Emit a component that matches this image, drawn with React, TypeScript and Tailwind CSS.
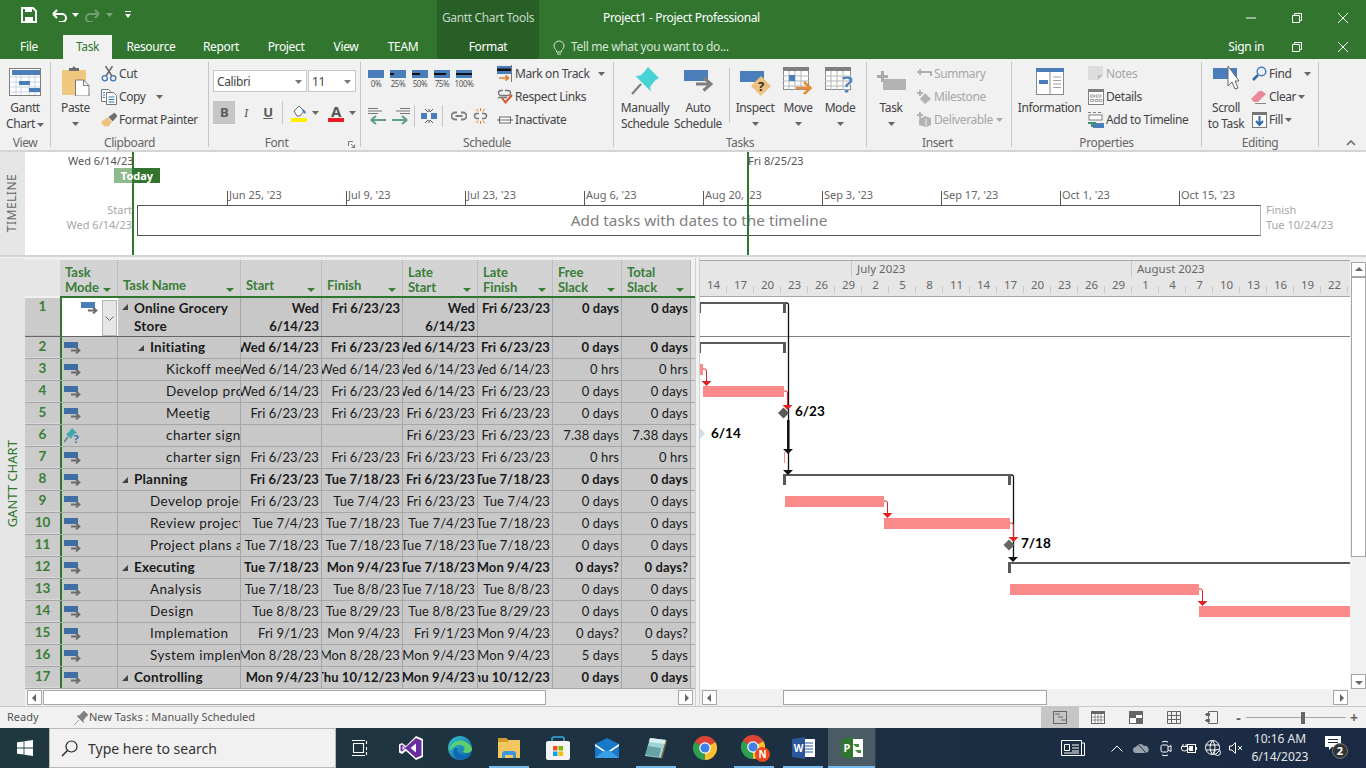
import React from "react";

function Caret({ c = "#666", className = "" }: { c?: string; className?: string }) {
  return (
    <svg width="7" height="4" viewBox="0 0 7 4" className={"shrink-0 " + className}>
      <path d="M0 0h7L3.5 4z" fill={c} />
    </svg>
  );
}

const Ic = ({ w, h, children, className = "" }: { w: number; h: number; children: React.ReactNode; className?: string }) => (
  <svg width={w} height={h} viewBox={`0 0 ${w} ${h}`} className={"shrink-0 " + className}>
    {children}
  </svg>
);

const GanttIcon = () => (
  <Ic w={32} h={28}>
    <rect x="0.5" y="0.5" width="31" height="27" fill="#fff" stroke="#7f7f7f" />
    <rect x="3" y="2" width="28" height="5" fill="#4a7ebb" />
    {[9, 14, 19, 24].map((y) => <path key={y} d={`M1 ${y}h30`} stroke="#c8d4e4" />)}
    {[7, 12, 20, 26].map((x) => <path key={x} d={`M${x} 7v20`} stroke="#c8d4e4" />)}
    <rect x="10" y="13" width="11" height="4" fill="#4a7ebb" />
    <rect x="20" y="20" width="11" height="4" fill="#4a7ebb" />
  </Ic>
);
const PasteIcon = () => (
  <Ic w={29} h={30}>
    <rect x="1" y="4" width="24" height="25" rx="1" fill="#efc77f" />
    <path d="M8 5h10V2h-3.4a1.6 1.6 0 0 0-3.2 0H8z" fill="#6e6e6e" />
    <path d="M14.5 14h8l5.5 5.5V30H14.5z" fill="#fff" stroke="#7a7a7a" />
    <path d="M22.5 14v5.5H28" fill="none" stroke="#7a7a7a" />
  </Ic>
);
const CutIcon = () => (
  <Ic w={16} h={16}>
    <circle cx="3.8" cy="12.2" r="2.6" fill="none" stroke="#3f76b5" strokeWidth="1.3" />
    <circle cx="12.2" cy="12.2" r="2.6" fill="none" stroke="#3f76b5" strokeWidth="1.3" />
    <path d="M5 10L11.5 0M11 10L4.5 0" stroke="#6d6d6d" strokeWidth="1.6" />
  </Ic>
);
const CopyIcon = () => (
  <Ic w={16} h={16}>
    <path d="M.5.5h7l2 2v10H.5z" fill="#fff" stroke="#777" />
    <path d="M5.5 3.5h7l3 3v9h-10z" fill="#fff" stroke="#777" />
    <path d="M7.5 8h6M7.5 10.5h6M7.5 13h6M2 3.5h2M2 6h2M2 8.5h2" stroke="#3f76b5" />
  </Ic>
);
const PainterIcon = () => (
  <Ic w={17} h={15}>
    <path d="M0 10l7-5 4 5-4 5q-1-1.500-2-1l-1 1q-1-2-2-1.500z" fill="#edc27f" />
    <path d="M7.500 5l6-4.500 3 3.500-4.800 5.500z" fill="#6e6e6e" />
  </Ic>
);
const Pct = ({ fill, t }: { fill: number; t: string }) => (
  <div className="flex flex-col items-center w-[16px]">
    <Ic w={16} h={8}>
      <rect width="16" height="8" fill="#4a7ebb" />
      {fill > 0 && <rect y="3" width={fill} height="2" fill="#111" />}
    </Ic>
    <span className="text-[8px] leading-[12px] text-[#555] whitespace-nowrap">{t}</span>
  </div>
);
const OutdentIcon = ({ flip }: { flip?: boolean }) => (
  <Ic w={20} h={17} className={flip ? "-scale-x-100" : ""}>
    <path d="M0 .5h10M0 3h14M0 5.500h10" stroke="#777" />
    <path d="M3 12h15M3 12l5-4M3 12l5 4" stroke="#5f9e8f" strokeWidth="2.200" fill="none" />
  </Ic>
);
const SplitIcon = () => (
  <Ic w={16} h={16}>
    <rect y="5" width="6" height="6" fill="#4a7ebb" />
    <rect x="10" y="5" width="6" height="6" fill="#4a7ebb" />
    <path d="M4 1l3 3M12 1L9 4M4 15l3-3M12 15l-3-3M8 1v3M8 12v3" stroke="#555" />
  </Ic>
);
const LinkIcon = ({ c = "#808080" }: { c?: string }) => (
  <Ic w={16} h={10}>
    <path d="M6 1.500H4a3.500 3.500 0 0 0 0 7h2M10 1.500h2a3.500 3.500 0 0 1 0 7h-2M4.500 5h7" stroke={c} strokeWidth="1.800" fill="none" />
  </Ic>
);
const UnlinkIcon = () => (
  <Ic w={15} h={16}>
    <path d="M6 5.500H4a2.500 2.500 0 0 0 0 5h2M9 5.500h2a2.500 2.500 0 0 1 0 5H9" stroke="#777" strokeWidth="1.500" fill="none" />
    <path d="M7.500 0v3M3.500 1l1.500 2.500M11.500 1L10 3.500M7.500 13v3M3.500 15l1.500-2.500M11.500 15L10 12.500" stroke="#e07b2e" />
  </Ic>
);
const TrackIcon = () => (
  <Ic w={16} h={17}>
    <rect y="1" width="15" height="8" fill="#4a7ebb" />
    <rect y="3.500" width="15" height="2.500" fill="#111" />
    <path d="M14.500 0v17" stroke="#777" />
    <path d="M2 13h10M8.500 10.500l3 2.500-3 2.500" stroke="#e5822e" strokeWidth="1.700" fill="none" />
  </Ic>
);
const RespectIcon = () => (
  <Ic w={17} h={16}>
    <path d="M6 1.500H4a2.500 2.500 0 0 0 0 5h7a2.500 2.500 0 0 0 0-5H8M1 8.500h9" stroke="#777" strokeWidth="1.400" fill="none" />
    <path d="M5 9l3.500 4.500L15 6" stroke="#d9542b" strokeWidth="2" fill="none" />
  </Ic>
);
const InactiveIcon = () => (
  <Ic w={16} h={8}>
    <path d="M0 4h2M14 4h2" stroke="#666" />
    <rect x="2.500" y="1" width="11" height="6" fill="#fff" stroke="#666" />
    <path d="M3 4h10" stroke="#666" />
  </Ic>
);
const PinIcon = ({ s = 28 }: { s?: number }) => (
  <svg width={s} height={s} viewBox="0 0 28 28" className="shrink-0">
    <path d="M14 4l3-4 11 11-4 2.500-5 6.500 1 4.500L4.500 9l5-.5z" fill="#46d3d6" />
    <path d="M10 17L1 27" stroke="#7a7a7a" strokeWidth="2" />
  </svg>
);
const AutoIcon = () => (
  <Ic w={29} h={22}>
    <rect width="24" height="11" fill="#4a7ebb" />
    <path d="M12 14h14M19.500 7.500L27 14l-7.500 6.500" stroke="#7f7f7f" strokeWidth="3" fill="none" />
  </Ic>
);
const InspectIcon = () => (
  <Ic w={31} h={29}>
    <rect y="4" width="24" height="11" fill="#4a7ebb" />
    <path d="M21 9l10 10-10 10-10-10z" fill="#eec27e" />
    <text x="21" y="24" textAnchor="middle" fontSize="13" fontWeight="700" fill="#333" fontFamily="Noto Sans">?</text>
  </Ic>
);
const CalGrid = () => (
  <>
    <rect x=".5" y=".5" width="25" height="22" fill="#fff" stroke="#8a8a8a" />
    <rect width="26" height="4" fill="#7f7f7f" />
    {[9, 14, 19].map((y) => <path key={y} d={`M0 ${y}h26`} stroke="#b5b5b5" />)}
    {[6, 12, 18].map((x) => <path key={x} d={`M${x} 4v19`} stroke="#b5b5b5" />)}
  </>
);
const MoveIcon = () => (
  <Ic w={30} h={28}>
    <CalGrid />
    <rect x="6" y="8" width="6" height="6" fill="#4a7ebb" />
    <path d="M13 21h14M21 15l6.500 6-6.500 6" stroke="#e58a3b" strokeWidth="2.600" fill="none" />
  </Ic>
);
const ModeIcon = () => (
  <Ic w={30} h={28}>
    <CalGrid />
    <text x="22" y="26" textAnchor="middle" fontSize="24" fontWeight="700" fill="#4a7ebb" fontFamily="Noto Sans" stroke="#fff" strokeWidth=".4">?</text>
  </Ic>
);
const TaskIcon = () => (
  <Ic w={29} h={20}>
    <path d="M4 0h3v4h4v3H7v4H4V7H0V4h4z" fill="#aaa" />
    <rect x="6" y="8" width="23" height="11" fill="#b3b3b3" />
  </Ic>
);
const SumIcon = () => (
  <Ic w={16} h={14}>
    <path d="M3 2h2v2h2v2H5v2H3V6H1V4h2z" fill="#b3b3b3" />
    <path d="M5 5h10v4M15 5v4" stroke="#9a9a9a" strokeWidth="1.500" fill="none" />
  </Ic>
);
const MileIcon = () => (
  <Ic w={16} h={14}>
    <path d="M3 0h2v2h2v2H5v2H3V4H1V2h2z" fill="#b3b3b3" />
    <path d="M9 3l6 6-6 5-5-5z" fill="#b3b3b3" />
  </Ic>
);
const DelivIcon = () => (
  <Ic w={16} h={15}>
    <path d="M3 0h2v2h2v2H5v2H3V4H1V2h2z" fill="#b3b3b3" />
    <path d="M3 7l6-3 6 2v7l-5 2-7-2z" fill="#b3b3b3" />
    <path d="M10 7v7" stroke="#f1f1f1" />
  </Ic>
);
const InfoIcon = () => (
  <Ic w={28} h={27}>
    <rect x=".5" y=".5" width="27" height="26" fill="#fff" stroke="#888" />
    <rect width="28" height="4" fill="#4a7ebb" />
    <rect x="3" y="12" width="9" height="4" fill="#4a7ebb" />
    <path d="M14 4v23" stroke="#888" />
    <path d="M17 9h8M17 12.500h8M17 16h8M17 19.500h8" stroke="#a0a0a0" />
  </Ic>
);
const NotesIcon = () => (
  <Ic w={16} h={15}><path d="M0 0h15v9l-5 5H0z" fill="#dcdcdc" /><path d="M10 14V9h5z" fill="#bdbdbd" /></Ic>
);
const DetailsIcon = () => (
  <Ic w={16} h={16}>
    <rect x=".5" y=".5" width="15" height="15" fill="#fff" stroke="#808080" />
    <rect width="16" height="3" fill="#808080" />
    <path d="M2.500 6h4v2h-4zM8 6h5v2H8zM2.500 10.500h3v2h-3zM7 10.500h3v2H7zM11 10.500h3v2h-3z" fill="none" stroke="#808080" strokeWidth=".7" />
  </Ic>
);
const AddTlIcon = () => (
  <Ic w={16} h={16}>
    <path d="M0 .5h3M5 .5h3M10 .5h3" stroke="#808080" />
    <rect x="1" y="3" width="13" height="5" fill="#fff" stroke="#808080" />
    <rect x="5" y="11" width="11" height="5" fill="#4a7ebb" />
    <path d="M2 10h6v2H5v3H3v-3H0v-2z" fill="#3f9070" />
  </Ic>
);
const ScrollIcon = () => (
  <Ic w={26} h={30}>
    <rect y="2" width="24" height="11" fill="#4a7ebb" />
    <path d="M15 0v20l4-4 3 7 3-1-3-7h4z" fill="#fff" stroke="#666" />
  </Ic>
);
const FindIcon = () => (
  <Ic w={15} h={15}>
    <circle cx="9.500" cy="5.500" r="4.300" fill="#eaf2fb" stroke="#4a7ebb" strokeWidth="1.500" />
    <path d="M6 9l-5 5" stroke="#2f69aa" strokeWidth="2.500" />
  </Ic>
);
const ClearIcon = () => (
  <Ic w={16} h={14}>
    <path d="M0 9l8-8h3l4 3-8 8H3z" fill="#e88a98" />
    <path d="M4 13.500h11" stroke="#888" />
  </Ic>
);
const FillIcon = () => (
  <Ic w={15} h={16}>
    <rect x=".5" y=".5" width="14" height="15" fill="#fff" stroke="#777" />
    <rect width="15" height="3" fill="#777" />
    <path d="M7.500 4v9M4 9l3.500 4L11 9" stroke="#2f69aa" strokeWidth="2" fill="none" />
  </Ic>
);
const BucketIcon = () => (
  <Ic w={16} h={18}>
    <path d="M3 7l5-5 5 5-4 5H6z" fill="#fff" stroke="#666" />
    <path d="M12 5l3 3-1 2-3-3z" fill="#4a7ebb" />
    <rect y="14" width="16" height="4" fill="#ffef00" />
  </Ic>
);

function Group({ className, label, children, labelClass = "", launcher }: { className: string; label: string; children: React.ReactNode; labelClass?: string; launcher?: boolean }) {
  return (
    <div className={`${className} h-[85px] mt-[3px] border-r border-[#c6c6c6] flex flex-col shrink-0 relative`}>
      <div className="h-[74px] flex">{children}</div>
      <div className={`h-[11px] leading-[14px] text-center text-[#666] text-[12px] ${labelClass}`}>{label}</div>
      {launcher && (
        <Ic w={7} h={7} className="absolute right-[5px] bottom-[-1px]">
          <path d="M.5 5V.5H5" fill="none" stroke="#777" /><path d="M3 3l3.500 3.500M3.500 6.500h3v-3" fill="none" stroke="#777" />
        </Ic>
      )}
    </div>
  );
}

function Large({ className, icon, lines, caret, iconBox = "h-[38px]" }: { className: string; icon: React.ReactNode; lines: string[]; caret?: boolean; iconBox?: string }) {
  return (
    <div className={`${className} flex flex-col items-center text-[12px] leading-[16px] text-[#444] shrink-0`}>
      <div className={`${iconBox} flex items-center justify-center`}>{icon}</div>
      {lines.map((l) => <span key={l} className="whitespace-nowrap">{l}</span>)}
      {caret && <Caret className="mt-[6px]" />}
    </div>
  );
}

function Small({ icon, text, caret, dim, className = "", iconW = "w-[18px]" }: { icon: React.ReactNode; text: string; caret?: React.ReactNode; dim?: boolean; className?: string; iconW?: string }) {
  return (
    <div className={`h-[23px] flex items-center text-[12px] whitespace-nowrap ${dim ? "text-[#a6a6a6]" : "text-[#444]"} ${className}`}>
      <span className={`${iconW} flex justify-center shrink-0`}>{icon}</span>
      <span className="ml-[1px]">{text}</span>
      {caret}
    </div>
  );
}

function TitleBar() {
  return (
    <div className="h-[59px] flex text-white shrink-0 bg-[#31752F] tracking-[-0.35px]">
      <div className="w-[437px] flex flex-col">
        <div className="h-[35px] flex items-center pb-[6px]">
          <Ic w={16} h={16} className="ml-[21px]">
            <path d="M1 1h11l3 3v11H1z" fill="none" stroke="#fff" strokeWidth="2" />
            <path d="M4 1h7v4H4zM4 10h8v5H4z" fill="#fff" />
          </Ic>
          <Ic w={16} h={14} className="ml-[14px]">
            <path d="M2 6h9a4 4 0 0 1 0 8H8M2 6l4-4M2 6l4 4" stroke="#fff" strokeWidth="2" fill="none" />
          </Ic>
          <Caret c="#fff" className="ml-[5px]" />
          <Ic w={16} h={14} className="ml-[6px] opacity-30 -scale-x-100">
            <path d="M2 6h9a4 4 0 0 1 0 8H8M2 6l4-4M2 6l4 4" stroke="#fff" strokeWidth="2" fill="none" />
          </Ic>
          <Caret c="#7da87c" className="ml-[5px]" />
          <Ic w={6} h={7} className="ml-[12px]">
            <path d="M0 .5h6" stroke="#fff" /><path d="M0 3h6L3 7z" fill="#fff" />
          </Ic>
        </div>
        <div className="h-[24px] flex text-[12px] leading-[24px] text-center">
          <span className="w-[59px] pr-[1px]">File</span>
          <span className="w-[4px]" />
          <span className="w-[49px] bg-[#f1f1f1] text-[#31752F]">Task</span>
          <span className="w-[78px]">Resource</span>
          <span className="w-[62px]">Report</span>
          <span className="w-[68px]">Project</span>
          <span className="w-[52px]">View</span>
          <span className="w-[62px]">TEAM</span>
        </div>
      </div>
      <div className="w-[102px] bg-[#285f26] flex flex-col text-[12px]">
        <div className="h-[35px] leading-[35px] text-center text-[#c5d6c4] whitespace-nowrap">Gantt Chart Tools</div>
        <div className="h-[24px] leading-[24px] text-center">Format</div>
      </div>
      <div className="flex-1 flex flex-col">
        <div className="h-[35px] flex items-center pl-[64px] text-[12px]">
          <span>Project1 - Project Professional</span>
          <span className="ml-auto flex items-center mr-[18px] gap-[36px]">
            <Ic w={10} h={10}><path d="M0 5h10" stroke="#fff" /></Ic>
            <Ic w={10} h={10}><path d="M.5 2.500h7v7h-7zM2.500 2.500v-2h7v7h-2" fill="none" stroke="#fff" /></Ic>
            <Ic w={10} h={10}><path d="M0 0l10 10M10 0L0 10" stroke="#fff" /></Ic>
          </span>
        </div>
        <div className="h-[24px] flex items-center text-[12px]">
          <Ic w={12} h={15} className="ml-[14px]">
            <path d="M3.500 10.500C2 9 1 7.800 1 6a5 5 0 0 1 10 0c0 1.800-1 3-2.500 4.500v1.500h-5zM4 14h4" fill="none" stroke="#d6e6d5" />
          </Ic>
          <span className="ml-[6px] text-[#d6e6d5]">Tell me what you want to do...</span>
          <span className="ml-auto mr-[18px] flex items-center">
            <span className="mr-[28px]">Sign in</span>
            <Ic w={10} h={10}><path d="M.5 2.500h7v7h-7zM2.500 2.500v-2h7v7h-2" fill="none" stroke="#fff" /></Ic>
            <Ic w={10} h={10} className="ml-[36px]"><path d="M0 0l10 10M10 0L0 10" stroke="#fff" /></Ic>
          </span>
        </div>
      </div>
    </div>
  );
}

function Ribbon() {
  return (
    <div className="h-[91px] flex bg-[#f1f1f1] shrink-0 relative tracking-[-0.4px]">
      <Group className="w-[51px]" label="View">
        <div className="w-[50px] flex flex-col items-center text-[12px] leading-[16px] text-[#444]">
          <div className="h-[38px] pt-[2px] flex items-center"><GanttIcon /></div>
          <span>Gantt</span>
          <span className="flex items-center gap-[2px]">Chart <Caret className="mt-[1px]" /></span>
        </div>
      </Group>
      <Group className="w-[158px]" label="Clipboard">
        <div className="w-[49px] flex flex-col items-center text-[12px] leading-[16px] text-[#444]">
          <div className="h-[38px] flex items-center"><PasteIcon /></div>
          <span>Paste</span>
          <Caret className="mt-[6px]" />
        </div>
        <div className="flex flex-col">
          <Small icon={<CutIcon />} text="Cut" />
          <Small icon={<CopyIcon />} text="Copy" caret={<Caret className="ml-[10px]" />} />
          <Small icon={<PainterIcon />} text="Format Painter" />
        </div>
      </Group>
      <Group className="w-[152px]" label="Font" labelClass="pr-[16px]" launcher>
        <div className="flex flex-col pl-[4px] pt-[8px]">
          <div className="flex gap-[1px]">
            <div className="w-[94px] h-[22px] bg-white border border-[#c6c6c6] flex items-center justify-between px-[3px] pr-[4px] pt-[1px] text-[12px] text-[#444]">
              Calibri <Caret c="#777" />
            </div>
            <div className="w-[48px] h-[22px] bg-white border border-[#c6c6c6] flex items-center justify-between px-[3px] pr-[4px] pt-[1px] text-[12px] text-[#444]">
              11 <Caret c="#777" />
            </div>
          </div>
          <div className="flex items-center mt-[9px] h-[23px] text-[#5a5a5a] text-[13px]">
            <span className="w-[22px] h-[23px] bg-[#c6c6c6] flex items-center justify-center font-bold">B</span>
            <span className="w-[22px] text-center italic font-serif">I</span>
            <span className="w-[22px] text-center underline font-bold">U</span>
            <span className="w-[4px] h-[23px] mr-[8px] border-r border-[#c6c6c6]" />
            <BucketIcon />
            <Caret className="ml-[5px]" />
            <div className="ml-[9px] flex flex-col items-center w-[16px] font-bold text-[15px] leading-[14px] text-[#555]">
              A<div className="w-[16px] h-[4px] bg-[#ee1c25]" />
            </div>
            <Caret className="ml-[5px]" />
          </div>
        </div>
      </Group>
      <Group className="w-[253px]" label="Schedule">
        <div className="w-[135px] pl-[7px] pt-[8px] flex flex-col">
          <div className="flex gap-[6px] h-[27px]">
            <Pct fill={0} t="0%" /><Pct fill={4} t="25%" /><Pct fill={8} t="50%" /><Pct fill={12} t="75%" /><Pct fill={16} t="100%" />
          </div>
          <div className="flex items-center mt-[7px] h-[24px]">
            <OutdentIcon />
            <span className="ml-[2px]"><OutdentIcon flip /></span>
            <span className="h-[22px] border-r border-[#c6c6c6] ml-[4px]" />
            <span className="ml-[6px]"><SplitIcon /></span>
            <span className="h-[22px] border-r border-[#c6c6c6] ml-[5px]" />
            <span className="ml-[8px]"><LinkIcon /></span>
            <span className="ml-[6px]"><UnlinkIcon /></span>
          </div>
        </div>
        <div className="flex flex-col">
          <Small icon={<TrackIcon />} text="Mark on Track" caret={<Caret className="ml-[9px]" />} iconW="w-[18px]" />
          <Small icon={<RespectIcon />} text="Respect Links" />
          <Small icon={<InactiveIcon />} text="Inactivate" />
        </div>
      </Group>
      <Group className="w-[253px]" label="Tasks">
        <Large className="w-[62px]" icon={<PinIcon />} lines={["Manually", "Schedule"]} />
        <Large className="w-[44px]" icon={<AutoIcon />} lines={["Auto", "Schedule"]} />
        <div className="w-[1px] ml-[9px] h-[55px] mt-[6px] bg-[#c6c6c6]" />
        <Large className="w-[50px]" icon={<InspectIcon />} lines={["Inspect"]} caret />
        <Large className="w-[36px]" icon={<MoveIcon />} lines={["Move"]} caret />
        <Large className="w-[48px]" icon={<ModeIcon />} lines={["Mode"]} caret />
      </Group>
      <Group className="w-[145px]" label="Insert" labelClass="pr-[3px]">
        <Large className="w-[48px]" icon={<TaskIcon />} lines={["Task"]} caret />
        <div className="flex flex-col">
          <Small dim icon={<SumIcon />} text="Summary" />
          <Small dim icon={<MileIcon />} text="Milestone" />
          <Small dim icon={<DelivIcon />} text="Deliverable" caret={<Caret c="#aaa" className="ml-[3px]" />} />
        </div>
      </Group>
      <Group className="w-[190px]" label="Properties">
        <Large className="w-[75px]" icon={<InfoIcon />} lines={["Information"]} />
        <div className="flex flex-col">
          <Small dim icon={<NotesIcon />} text="Notes" />
          <Small icon={<DetailsIcon />} text="Details" />
          <Small icon={<AddTlIcon />} text="Add to Timeline" />
        </div>
      </Group>
      <Group className="w-[117px]" label="Editing">
        <Large className="w-[48px]" icon={<ScrollIcon />} lines={["Scroll", "to Task"]} />
        <div className="flex flex-col">
          <Small icon={<FindIcon />} text="Find" caret={<Caret className="ml-[12px]" />} />
          <Small icon={<ClearIcon />} text="Clear" caret={<Caret className="ml-[2px]" />} />
          <Small icon={<FillIcon />} text="Fill" caret={<Caret className="ml-[2px]" />} />
        </div>
      </Group>
      <div className="flex-1 flex justify-end items-end pb-[4px] pr-[10px]">
        <Ic w={10} h={6}><path d="M1 5l4-4 4 4" stroke="#666" strokeWidth="1.500" fill="none" /></Ic>
      </div>
    </div>
  );
}

const TICKS = ["Jun 25, '23", "Jul 9, '23", "Jul 23, '23", "Aug 6, '23", "Aug 20, '23", "Sep 3, '23", "Sep 17, '23", "Oct 1, '23", "Oct 15, '23"];

function Timeline() {
  return (
    <div className="h-[107px] flex shrink-0 relative bg-white border-y-2 border-[#d4d4d4]">
      <div className="w-[25px] bg-[#e6e6e6] flex items-center justify-center pb-[2px]">
        <span className="-rotate-90 text-[12px] tracking-[.5px] text-[#666] whitespace-nowrap">TIMELINE</span>
      </div>
      <div className="w-[112px] flex flex-col items-end pr-[5px] text-[11px] text-[#a6a6a6] leading-[15px] pt-[50px]">
        <span>Start</span>
        <span>Wed 6/14/23</span>
      </div>
      <div className="w-[1124px] flex flex-col pt-[37px]">
        <div className="h-[14px] mt-[2px] flex pl-[90px] text-[11px] text-[#666] leading-[8px] overflow-visible">
          {TICKS.map((t) => (
            <div key={t} className="w-[119px] h-[14px] border-l border-[#555] pl-[1px] whitespace-nowrap shrink-0">{t}</div>
          ))}
        </div>
        <div className="h-[31px] border-y border-l border-[#555] border-r-[#b5b5b5] border-r flex items-center justify-center text-[15.3px] text-[#808080]">
          Add tasks with dates to the timeline
        </div>
      </div>
      <div className="flex flex-col pl-[5px] text-[11px] text-[#a6a6a6] leading-[15px] pt-[50px]">
        <span>Finish</span>
        <span>Tue 10/24/23</span>
      </div>
      <div className="absolute left-[132px] top-0 w-[2px] h-[103px] bg-[#31752F]" />
      <div className="absolute left-[747px] top-0 w-[2px] h-[103px] bg-[#31752F]" />
      <span className="absolute left-[68px] top-[1px] text-[11px] leading-[15px] text-[#555]">Wed 6/14/23</span>
      <span className="absolute left-[748px] top-[1px] text-[11px] leading-[15px] text-[#555]">Fri 8/25/23</span>
      <div className="absolute left-[114px] top-[16px] w-[46px] h-[15px] flex text-white text-[11px] font-bold leading-[15px]">
        <div className="w-[18px] bg-[#8fb98e]" />
        <div className="flex-1 bg-[#31752F]" />
        <span className="absolute inset-0 text-center">Today</span>
      </div>
    </div>
  );
}

type Row = [number, number, string, string, string, string, string, string, string, boolean?, boolean?];
const ROWS: Row[] = [
  [2, 1, "Initiating", "Wed 6/14/23", "Fri 6/23/23", "Wed 6/14/23", "Fri 6/23/23", "0 days", "0 days", true, true],
  [3, 2, "Kickoff meeting", "Wed 6/14/23", "Wed 6/14/23", "Wed 6/14/23", "Wed 6/14/23", "0 hrs", "0 hrs"],
  [4, 2, "Develop project charter", "Wed 6/14/23", "Fri 6/23/23", "Wed 6/14/23", "Fri 6/23/23", "0 days", "0 days"],
  [5, 2, "Meetig", "Fri 6/23/23", "Fri 6/23/23", "Fri 6/23/23", "Fri 6/23/23", "0 days", "0 days"],
  [6, 2, "charter signing", "", "", "Fri 6/23/23", "Fri 6/23/23", "7.38 days", "7.38 days"],
  [7, 2, "charter signing", "Fri 6/23/23", "Fri 6/23/23", "Fri 6/23/23", "Fri 6/23/23", "0 hrs", "0 hrs"],
  [8, 0, "Planning", "Fri 6/23/23", "Tue 7/18/23", "Fri 6/23/23", "Tue 7/18/23", "0 days", "0 days", true, true],
  [9, 1, "Develop project plan", "Fri 6/23/23", "Tue 7/4/23", "Fri 6/23/23", "Tue 7/4/23", "0 days", "0 days"],
  [10, 1, "Review project plan", "Tue 7/4/23", "Tue 7/18/23", "Tue 7/4/23", "Tue 7/18/23", "0 days", "0 days"],
  [11, 1, "Project plans approved", "Tue 7/18/23", "Tue 7/18/23", "Tue 7/18/23", "Tue 7/18/23", "0 days", "0 days"],
  [12, 0, "Executing", "Tue 7/18/23", "Mon 9/4/23", "Tue 7/18/23", "Mon 9/4/23", "0 days?", "0 days?", true, true],
  [13, 1, "Analysis", "Tue 7/18/23", "Tue 8/8/23", "Tue 7/18/23", "Tue 8/8/23", "0 days", "0 days"],
  [14, 1, "Design", "Tue 8/8/23", "Tue 8/29/23", "Tue 8/8/23", "Tue 8/29/23", "0 days", "0 days"],
  [15, 1, "Implemation", "Fri 9/1/23", "Mon 9/4/23", "Fri 9/1/23", "Mon 9/4/23", "0 days?", "0 days?"],
  [16, 1, "System implementation", "Mon 8/28/23", "Mon 8/28/23", "Mon 9/4/23", "Mon 9/4/23", "5 days", "5 days"],
  [17, 0, "Controlling", "Mon 9/4/23", "Thu 10/12/23", "Mon 9/4/23", "Thu 10/12/23", "0 days", "0 days", true, true],
];
const LEVEL = ["pl-[16px]", "pl-[32px]", "pl-[48px]"];
const W = ["w-[81px]", "w-[81px]", "w-[75px]", "w-[75px]", "w-[69px]", "w-[69px]"];

const ModeGlyph = ({ dark }: { dark?: boolean }) => (
  <Ic w={17} h={12}>
    <rect width="14" height="6" fill={dark ? "#3f6ea5" : "#4a7ebb"} />
    <path d="M7 8.500h8M12 5.500l3.500 3-3.500 3" stroke="#6b6b6b" strokeWidth="1.800" fill="none" />
  </Ic>
);
const PinQ = () => (
  <Ic w={17} h={15}>
    <path d="M5 4l3-4 5 5-3 1-2 3-1 2-5-5z" fill="#3fa9ad" />
    <path d="M4 9L0 14" stroke="#5b7e92" strokeWidth="1.500" />
    <text x="12" y="15" textAnchor="middle" fontSize="11" fontWeight="700" fill="#3f6ea5" fontFamily="Noto Sans">?</text>
  </Ic>
);
const Expand = () => (
  <svg width="6" height="6" viewBox="0 0 6 6" className="shrink-0"><path d="M6 0v6H0z" fill="#444" /></svg>
);

const Cell = ({ w, bold, children }: { w: string; bold?: boolean; children?: React.ReactNode }) => (
  <div className={`${w} shrink-0 border-r border-[#a6a6a6] flex justify-end items-center overflow-hidden pr-[2px] whitespace-nowrap text-[13px] tracking-[.1px] text-[#1a1a1a] ${bold ? "font-bold" : ""}`}>
    {children}
  </div>
);

function HeadCell({ w, a, b }: { w: string; a: string; b?: string }) {
  return (
    <div className={`${w} shrink-0 border-r border-[#bdbdbd] relative pl-[5px] flex flex-col justify-end leading-[15px] font-bold text-[#3a7d38] text-[13px] ${b ? "pb-[1px]" : "pb-[3px]"}`}>
      <span>{a}</span>
      {b && <span>{b}</span>}
      <svg width="8" height="4" viewBox="0 0 8 4" className="absolute right-[6px] bottom-[4px]"><path d="M0 0h8L4 4z" fill="#3a7d38" /></svg>
    </div>
  );
}

function Table() {
  return (
    <div className="font-['Lato',sans-serif] text-[13.5px] h-[431px] flex flex-col pt-[2px] overflow-hidden">
      <div className="h-[36px] flex shrink-0">
        <div className="w-[35px] shrink-0 bg-[#e6e6e6]" />
        <div className="flex bg-[#d3d3d3]">
          <HeadCell w="w-[58px]" a="Task" b="Mode" />
          <HeadCell w="w-[123px]" a="Task Name" />
          <HeadCell w="w-[81px]" a="Start" />
          <HeadCell w="w-[81px]" a="Finish" />
          <HeadCell w="w-[75px]" a="Late" b="Start" />
          <HeadCell w="w-[75px]" a="Late" b="Finish" />
          <HeadCell w="w-[69px]" a="Free" b="Slack" />
          <HeadCell w="w-[69px]" a="Total" b="Slack" />
        </div>
      </div>
      <div className="h-[2px] ml-[35px] w-[635px] bg-[#31752F] shrink-0" />
      <div className="h-[39px] flex shrink-0 border-b border-[#666] leading-[18px]">
        <div className="w-[35px] shrink-0 bg-[#cbcbcb] text-center font-bold text-[#3a7d38] border-b border-[#bdbdbd] leading-[16px]">1</div>
        <div className="w-[58px] shrink-0 border-l-2 border-[#31752F] bg-white flex justify-end items-start pt-[2px] pr-[1px]">
          <span className="mt-[2px] mr-[4px]"><ModeGlyph /></span>
          <span className="w-[15px] h-[36px] bg-[#e6e6e6] border border-[#b5b5b5] flex items-center justify-center">
            <Ic w={9} h={5}><path d="M.5.500l4 4 4-4" stroke="#666" fill="none" /></Ic>
          </span>
        </div>
        <div className="w-[123px] shrink-0 bg-[#c8c8c8] border-r border-[#a6a6a6] pl-[4px] pt-[1px] flex font-bold text-[#1a1a1a] tracking-[.2px]">
          <span className="pt-[5px] w-[12px] shrink-0"><Expand /></span>
          <span>Online Grocery Store</span>
        </div>
        {["Wed 6/14/23", "Fri 6/23/23", "Wed 6/14/23", "Fri 6/23/23", "0 days", "0 days"].map((t, i) => (
          <div key={i} className={`${W[i]} shrink-0 bg-[#c8c8c8] border-r border-[#a6a6a6] font-bold text-[13px] text-right pr-[2px] pt-[1px] text-[#1a1a1a]`}>
            {t}
          </div>
        ))}
        <div className="flex-1 bg-[#d8d8d8]" />
      </div>
      {ROWS.map((r) => (
        <div key={r[0]} className="h-[22px] flex shrink-0 border-b border-[#a6a6a6]">
          <div className="w-[35px] shrink-0 bg-[#cbcbcb] text-center font-bold text-[#3a7d38] border-b border-[#d8d8d8] leading-[19px]">{r[0]}</div>
          <div className="w-[58px] shrink-0 border-l-2 border-[#31752F] bg-[#c8c8c8] border-r border-r-[#a6a6a6] flex items-center pl-[2px]">
            {r[0] === 6 ? <PinQ /> : <ModeGlyph dark />}
          </div>
          <div className={`w-[123px] shrink-0 bg-[#c8c8c8] border-r border-[#a6a6a6] flex items-center overflow-hidden whitespace-nowrap text-[#1a1a1a] ${r[9] ? "font-bold tracking-[.2px]" : "tracking-[.45px]"} ${LEVEL[r[1]]}`}>
            {r[10] && <span className="-ml-[12px] w-[12px] flex shrink-0"><Expand /></span>}
            <span>{r[2]}</span>
          </div>
          {[r[3], r[4], r[5], r[6], r[7], r[8]].map((t, i) => (
            <div key={i} className="bg-[#c8c8c8] flex">
              <Cell w={W[i]} bold={r[9]}>{t}</Cell>
            </div>
          ))}
          <div className="flex-1 bg-[#d8d8d8]" />
        </div>
      ))}
    </div>
  );
}

const ScrollBtn = ({ dir, className = "" }: { dir: "l" | "r" | "u" | "d"; className?: string }) => {
  const p = { l: "M7 2v8L3 6z", r: "M5 2v8l4-4z", u: "M2 7h8L6 3z", d: "M2 5h8L6 9z" }[dir];
  return (
    <div className={`w-[15px] h-[15px] bg-white border border-[#a6a6a6] flex items-center justify-center shrink-0 ${className}`}>
      <Ic w={12} h={12}><path d={p} fill="#666" /></Ic>
    </div>
  );
};

const DAYS = ["14", "17", "20", "23", "26", "29", "2", "5", "8", "11", "14", "17", "20", "23", "26", "29", "1", "4", "7", "10", "13", "16", "19", "22"];
const PINK = "#fb8a8a";
const RED = "#dc2424";

const Down = ({ x, y, c }: { x: number; y: number; c: string }) => <path d={`M${x - 5} ${y}h10l-5 5z`} fill={c} />;
const Summary = ({ a, b, y, thin }: { a: number; b: number; y: number; thin?: boolean }) => (
  <path d={`M${a} ${y}H${b}v11h-3v-9H${a + (thin ? 1 : 3)}v9H${a}z`} fill="#595959" />
);

function Chart() {
  return (
    <div className="w-[650px] shrink-0 flex flex-col">
      <div className="h-[39px] pt-[2px] shrink-0">
        <div className="h-[37px] bg-[#e6e6e6] border-t border-b border-[#a6a6a6] flex flex-col text-[11.5px] text-[#666]">
          <div className="h-[16px] flex leading-[15px]">
            <div className="w-[152px] border-r border-[#c8c8c8]" />
            <div className="w-[280px] border-r border-[#c8c8c8] pl-[5px]">July 2023</div>
            <div className="pl-[5px]">August 2023</div>
          </div>
          <div className="h-[19px] flex leading-[16px]">
            {DAYS.map((d, i) => (
              <div key={i} className="w-[27px] shrink-0 text-center relative">
                {d}
                <span className="absolute right-0 bottom-[3px] h-[7px] border-r border-[#c8c8c8]" />
              </div>
            ))}
          </div>
        </div>
      </div>
      <div className="h-[392px] bg-white relative overflow-hidden shrink-0 font-['Lato',sans-serif]">
        <svg width="650" height="392" viewBox="700 297 650 392" className="absolute inset-0">
          <rect x="700" y="336" width="650" height="1" fill="#808080" />
          <path d="M786 303h1q1.500 0 1.500 2V472" stroke="#111" strokeWidth="1.300" fill="none" />
          <rect x="787" y="420" width="2.500" height="30" fill="#111" />
          <path d="M1011 475h1q1.500 0 1.500 2V558" stroke="#111" strokeWidth="1.300" fill="none" />
          <Summary a={700} b={786} y={302} thin />
          <Summary a={700} b={786} y={342} thin />
          <Summary a={783} b={1011} y={474} />
          <path d="M1008 562H1350v2H1011v9h-3z" fill="#595959" />
          <rect x="700" y="364" width="3" height="11" fill={PINK} />
          <rect x="703" y="386" width="81" height="11" fill={PINK} />
          <rect x="784" y="452" width="1" height="11" fill={PINK} />
          <rect x="785" y="496" width="99" height="11" fill={PINK} />
          <rect x="884" y="518" width="126" height="11" fill={PINK} />
          <rect x="1010" y="584" width="189" height="11" fill={PINK} />
          <rect x="1199" y="606" width="151" height="11" fill={PINK} />
          {[[703, 369, 706.5, 381], [784, 391, 787.5, 405], [884, 501, 887.5, 513], [1010, 523, 1013.5, 537], [1199, 589, 1202.5, 601]].map(([a, y, x, e]) => (
            <g key={a}>
              <path d={`M${a} ${y}h${x - a - 2}q2 0 2 2V${e}`} stroke={RED} fill="none" />
              <Down x={x} y={e} c={RED} />
            </g>
          ))}
          <Down x={788} y={449} c="#111" />
          <Down x={788} y={470} c="#111" />
          <Down x={1013} y={557} c="#111" />
          <path d="M783.500 407.500l5.500 5.500-5.500 5.500-5.500-5.500z" fill="#595959" />
          <path d="M1009 539.500l5.500 5.500-5.500 5.500-5.500-5.500z" fill="#666" />
          <path d="M700 428v11l5-5.500z" fill="#d0dcea" />
        </svg>
        <span className="absolute left-[95px] top-[105px] leading-[18px] text-[13.5px] font-bold text-black">6/23</span>
        <span className="absolute left-[11px] top-[127px] leading-[18px] text-[13.5px] font-bold text-black">6/14</span>
        <span className="absolute left-[321px] top-[237px] leading-[18px] text-[13.5px] font-bold text-black">7/18</span>
      </div>
    </div>
  );
}

function Gantt() {
  return (
    <div className="h-[448px] flex shrink-0 bg-[#f1f1f1]">
      <div className="w-[25px] bg-[#e6e6e6] flex items-center justify-center pt-[4px]">
        <span className="-rotate-90 text-[13px] text-[#31752F] whitespace-nowrap">GANTT CHART</span>
      </div>
      <div className="w-[670px] shrink-0 flex flex-col">
        <Table />
        <div className="h-[17px] flex pt-[1px] pl-[2px] bg-[#f1f1f1]">
          <ScrollBtn dir="l" />
          <div className="w-[503px] ml-[1px] h-[15px] bg-white border border-[#a6a6a6]" />
          <ScrollBtn dir="r" className="ml-[132px]" />
        </div>
      </div>
      <div className="w-[5px] shrink-0 border-x border-[#d0d0d0] bg-[#f1f1f1]" />
      <div className="flex flex-col">
        <Chart />
        <div className="h-[17px] flex pt-[1px] pl-[2px]">
          <ScrollBtn dir="l" />
          <div className="w-[264px] ml-[66px] h-[15px] bg-white border border-[#a6a6a6]" />
          <ScrollBtn dir="r" className="ml-[286px]" />
        </div>
      </div>
      <div className="flex-1 flex flex-col items-center pt-[4px] pl-[1px]">
        <ScrollBtn dir="u" />
        <div className="w-[15px] h-[280px] bg-white border border-[#a6a6a6]" />
        <div className="h-[117px]" />
        <ScrollBtn dir="d" />
      </div>
    </div>
  );
}

function StatusBar() {
  return (
    <div className="h-[22px] border-t border-[#c8c8c8] flex items-center bg-[#f1f1f1] text-[11px] text-[#555] shrink-0">
      <span className="ml-[7px] w-[67px]">Ready</span>
      <Ic w={14} h={14}><path d="M7 3l3-3 4 4-2 1.500-3 4 .5 2L3 5l3-.5zM5 9L0 14" fill="#808080" stroke="#808080" strokeWidth=".7" /></Ic>
      <span className="ml-[1px]">New Tasks : Manually Scheduled</span>
      <div className="ml-auto flex items-center h-full">
        <div className="w-[38px] h-full bg-[#c6c6c6] flex items-center justify-center">
          <Ic w={14} h={13}><rect x=".5" y=".5" width="13" height="12" fill="none" stroke="#666" /><path d="M2 3h5M5 6h5M8 9h5" stroke="#666" /></Ic>
        </div>
        <div className="w-[38px] flex justify-center">
          <Ic w={14} h={13}><rect x=".5" y=".5" width="13" height="12" fill="#fff" stroke="#666" /><rect width="14" height="3" fill="#666" /><path d="M0 6h14M0 9h14M4 3v10M7 3v10M10 3v10" stroke="#666" strokeWidth=".7" /></Ic>
        </div>
        <div className="w-[38px] flex justify-center">
          <Ic w={14} h={13}><rect x=".5" y=".5" width="13" height="12" fill="#fff" stroke="#666" /><path d="M1 1h12v3H7v3H1zM7 7h6v5H7z" fill="#666" /></Ic>
        </div>
        <div className="w-[38px] flex justify-center">
          <Ic w={14} h={13}><path d="M.5.500h13v12H.5zM.5 4.500h13M.5 8.500h13M4.500.500v12M9.500.500v12" fill="none" stroke="#666" /></Ic>
        </div>
        <div className="w-[38px] flex justify-center">
          <Ic w={14} h={13}><path d="M3.500.500h9v12h-9zM3.500 3.500H0M3.500 9.500H0" fill="none" stroke="#666" /><rect x="1" y="2" width="4" height="3" fill="#666" /><rect x="1" y="8" width="4" height="3" fill="#666" /></Ic>
        </div>
        <div className="w-[15px] text-[#666] font-bold text-center text-[14px] leading-[14px]">-</div>
        <div className="w-[100px] h-[14px] relative flex items-center">
          <div className="w-full h-px bg-[#a6a6a6]" />
          <div className="absolute left-[55px] top-[1px] w-[4px] h-[12px] bg-[#666]" />
        </div>
        <div className="w-[16px] mr-[4px] text-center text-[#666] font-bold text-[14px] leading-[14px]">+</div>
      </div>
    </div>
  );
}

function Chrome({ s = 24 }: { s?: number }) {
  return (
    <svg width={s} height={s} viewBox="0 0 24 24" className="shrink-0">
      <path d="M12 12L1.600 6A12 12 0 0 1 22.400 6z" fill="#db4437" />
      <path d="M12 12L22.400 6A12 12 0 0 1 12 24z" fill="#fbc02d" />
      <path d="M12 12L12 24A12 12 0 0 1 1.600 6z" fill="#2e9e4f" />
      <circle cx="12" cy="12" r="5.800" fill="#fff" />
      <circle cx="12" cy="12" r="4.600" fill="#3f81e8" />
    </svg>
  );
}

const TaskBtn = ({ className, on, children }: { className: string; on?: boolean; children: React.ReactNode }) => (
  <div className={`${className} h-[40px] shrink-0 flex items-center justify-center relative`}>
    {children}
    {on && <span className="absolute bottom-0 left-0 right-0 h-[2px] bg-[#76b9ed]" />}
  </div>
);

function Taskbar() {
  return (
    <div className="h-[40px] flex items-center shrink-0 bg-linear-to-r from-[#20383f] to-[#1b2a44] text-white">
      <div className="w-[49px] flex justify-center">
        <Ic w={16} h={16}><path d="M0 2.300L6.600 1.400v6.200H0zM7.400 1.300L16 0v7.600H7.400zM0 8.400h6.600v6.200L0 13.700zM7.400 8.400H16V16l-8.600-1.300z" fill="#fff" /></Ic>
      </div>
      <div className="w-[287px] h-[40px] bg-[#f1f1f1] border border-[#b9b9b9] flex items-center text-[#333] text-[14px] shrink-0">
        <Ic w={17} h={17} className="ml-[11px]"><circle cx="10.500" cy="6.500" r="5.500" fill="none" stroke="#222" strokeWidth="1.200" /><path d="M6.500 10.500L1 16" stroke="#222" strokeWidth="1.500" /></Ic>
        <span className="ml-[10px]">Type here to search</span>
      </div>
      <TaskBtn className="w-[48px]">
        <Ic w={16} h={16}><path d="M1.500 3.500h10v9h-10zM0 .5h13M0 15.500h13M14.500 1v3M14.500 7v3M14.500 12v3" fill="none" stroke="#fff" strokeWidth="1.100" /></Ic>
      </TaskBtn>
      <TaskBtn className="w-[54px]">
        <Ic w={24} h={24}>
          <path d="M17 0l7 3v18l-7 3-10-9-4 3-3-1.500V8.500L3 7l4 3z" fill="#fff" />
          <path d="M17 2l5.500 2.400v15.200L17 22l-10.500-9.500L3 15.500 1.500 14.700V9.300L3 8.500l3.500 3L17 2z" fill="#6a2d9f" />
          <path d="M17 7.500v9L11.500 12zM3.500 10l2.500 2-2.500 2z" fill="#fff" />
        </Ic>
      </TaskBtn>
      <TaskBtn className="w-[44px]">
        <svg width="24" height="24" viewBox="0 0 24 24">
          <defs>
            <linearGradient id="edgeA" x1="0" y1="0" x2="1" y2="1"><stop offset="0" stopColor="#37c6d0" /><stop offset="1" stopColor="#0c59a4" /></linearGradient>
          </defs>
          <circle cx="12" cy="12" r="12" fill="url(#edgeA)" />
          <path d="M1 15C2 7 10 3 16 5s8 7 8 8c0 3-3 4-6 4-2 0-3-1-3-2 1-1 2-2 1-4-2-3-7-3-10 0-3 2-4 3-5 4z" fill="#5bd06b" />
          <path d="M7 12c-3 3-2 9 3 11 6 2 11-1 13-5-4 2-9 2-12-1-2-2-2-4-1-5z" fill="#0f69b4" />
        </svg>
      </TaskBtn>
      <div className="w-[7px] shrink-0" />
      <TaskBtn className="w-[40px]" on>
        <Ic w={22} h={20}>
          <path d="M0 0h8l2 2h12v18H0z" fill="#f3c65f" />
          <path d="M0 0h8l2 2v2H0z" fill="#d39b2b" />
          <path d="M4 20v-4q0-3 3-3h8q3 0 3 3v4h-3v-3H7v3z" fill="#3a96dd" />
        </Ic>
      </TaskBtn>
      <TaskBtn className="w-[58px]">
        <Ic w={24} h={24}>
          <path d="M6 6V3q0-2 2-2h8q2 0 2 2v3" fill="none" stroke="#2eaee0" strokeWidth="1.600" />
          <rect y="5" width="24" height="19" rx="2" fill="#f4f4f4" />
          <rect x="7" y="10" width="4.500" height="4.500" fill="#f25022" /><rect x="12.500" y="10" width="4.500" height="4.500" fill="#7fba00" />
          <rect x="7" y="15.500" width="4.500" height="4.500" fill="#00a4ef" /><rect x="12.500" y="15.500" width="4.500" height="4.500" fill="#ffb900" />
        </Ic>
      </TaskBtn>
      <TaskBtn className="w-[40px]">
        <Ic w={24} h={20}>
          <path d="M0 6L12 0l12 6v14H0z" fill="#1a78c8" />
          <path d="M0 6l12 8 12-8v2L12 16 0 8z" fill="#fff" />
          <path d="M0 20l10-8 2 1 2-1 10 8z" fill="#3aa0e6" />
        </Ic>
      </TaskBtn>
      <div className="w-[9px] shrink-0" />
      <TaskBtn className="w-[40px]" on>
        <Ic w={24} h={22}>
          <path d="M6 1l16 2-5 18-16-2z" fill="#9fd2d6" />
          <path d="M6 1l16 2-1 4-16-2z" fill="#dbeef0" />
          <path d="M22 3l1 1-5 18-1-1z" fill="#8a6a2e" />
          <path d="M4 9l13 2-2 9-14-2z" fill="#4d8e96" opacity=".7" />
        </Ic>
      </TaskBtn>
      <TaskBtn className="w-[58px]"><Chrome /></TaskBtn>
      <TaskBtn className="w-[40px]" on>
        <div className="relative w-[26px] h-[26px]">
          <Chrome />
          <span className="absolute -right-[3px] -bottom-[1px] w-[15px] h-[15px] rounded-full bg-[#e8491d] text-white text-[10px] font-bold leading-[15px] text-center">N</span>
        </div>
      </TaskBtn>
      <div className="w-[9px] shrink-0" />
      <TaskBtn className="w-[40px]" on>
        <Ic w={23} h={22}>
          <rect x="10" y="2" width="13" height="18" fill="#fff" />
          <path d="M12 6h9M12 9h9M12 12h9M12 15h9" stroke="#2b579a" />
          <path d="M0 2l13-2v22L0 20z" fill="#2b579a" />
          <text x="6.500" y="15" textAnchor="middle" fontSize="10" fontWeight="700" fill="#fff" fontFamily="Noto Sans">W</text>
        </Ic>
      </TaskBtn>
      <div className="w-[5px] shrink-0" />
      <TaskBtn className="w-[48px] bg-[#4b5b66] border-r border-[#2e3c46]" on>
        <Ic w={22} h={22}>
          <rect x="9" y="2" width="13" height="18" fill="#fff" />
          <path d="M12 7h6v3h-3zM14 13h6v3h-3z" fill="#3d8f3d" />
          <path d="M0 2l12-2v22L0 20z" fill="#31752F" />
          <text x="6" y="15" textAnchor="middle" fontSize="11" fontWeight="700" fill="#fff" fontFamily="Noto Sans">P</text>
        </Ic>
      </TaskBtn>
      <div className="ml-auto flex items-center h-full">
        <Ic w={24} h={16} className="mr-[26px]">
          <path d="M.5.500h20v15H.5zM20.500 3h3v12.500h-3" fill="none" stroke="#fff" />
          <path d="M3.500 4.500h5v6h-5zM11 5h7M11 8h7M11 11h7M3 13h15" fill="none" stroke="#fff" />
        </Ic>
        <Ic w={12} h={7} className="mr-[10px]"><path d="M.5 6.500l5.500-5.500 5.500 5.500" fill="none" stroke="#fff" /></Ic>
        <Ic w={16} h={12} className="mr-[11px]">
          <path d="M3 11a3 3 0 0 1 0-6 4.500 4.500 0 0 1 8-1 3.500 3.500 0 0 1 2 7z" fill="#9aa3ad" />
          <path d="M3 0l11 12" stroke="#1b2a44" strokeWidth="1" />
        </Ic>
        <Ic w={12} h={17} className="mr-[9px]">
          <rect x="1" y="5" width="7" height="7" rx="1.500" fill="none" stroke="#fff" />
          <path d="M8 7l3-1.500v6L8 10M2 2q3-1.500 6 0M2 15q3 1.500 6 0" fill="none" stroke="#fff" />
        </Ic>
        <Ic w={16} h={11} className="mr-[8px]">
          <path d="M2 1v2M5 1v2M0.500 3.500h6v2.500q0 2-3 2t-3-2zM6 6h2" fill="none" stroke="#fff" />
          <rect x="6.500" y="1.500" width="8" height="8" fill="none" stroke="#fff" />
          <rect x="8" y="3" width="4" height="5" fill="#fff" /><rect x="15" y="4" width="1" height="3" fill="#fff" />
        </Ic>
        <Ic w={16} h={16} className="mr-[8px]">
          <circle cx="7.500" cy="7.500" r="7" fill="none" stroke="#fff" />
          <path d="M1 5h13M1 10h13M7.500.500q-5 7 0 14q5-7 0-14" fill="none" stroke="#fff" />
          <circle cx="12.500" cy="12.500" r="3" fill="#1b2a44" stroke="#fff" />
          <path d="M10.500 14.500l4-4" stroke="#fff" />
        </Ic>
        <Ic w={14} h={12}>
          <path d="M.5 4h2.500L6.500.5v11L3 8H.5z" fill="none" stroke="#fff" />
          <path d="M9 4l4 4M13 4l-4 4" stroke="#fff" />
        </Ic>
        <div className="w-[74px] text-center text-[12px] leading-[18px] text-[#e6e6e6] mr-[8px]">
          <div>10:16 AM</div>
          <div>6/14/2023</div>
        </div>
        <div className="relative w-[24px] h-[24px] mr-[17px]">
          <Ic w={16} h={14}><path d="M0 0h16v11H7l-3 3v-3H0z" fill="#fff" /><path d="M3 3.500h10M3 6.500h10" stroke="#1b2a44" /></Ic>
          <span className="absolute left-[7px] top-[7px] w-[16px] h-[16px] rounded-full bg-[#333] border border-[#777] text-white text-[11px] font-bold leading-[14px] text-center">2</span>
        </div>
      </div>
    </div>
  );
}

export default function App() {
  return (
    <div className="w-[1366px] h-[768px] overflow-hidden flex flex-col bg-[#f1f1f1] font-['Noto_Sans',sans-serif]">
      <TitleBar />
      <Ribbon />
      <Timeline />
      <div className="h-[1px] shrink-0 bg-[#f1f1f1]" />
      <Gantt />
      <StatusBar />
      <Taskbar />
    </div>
  );
}
